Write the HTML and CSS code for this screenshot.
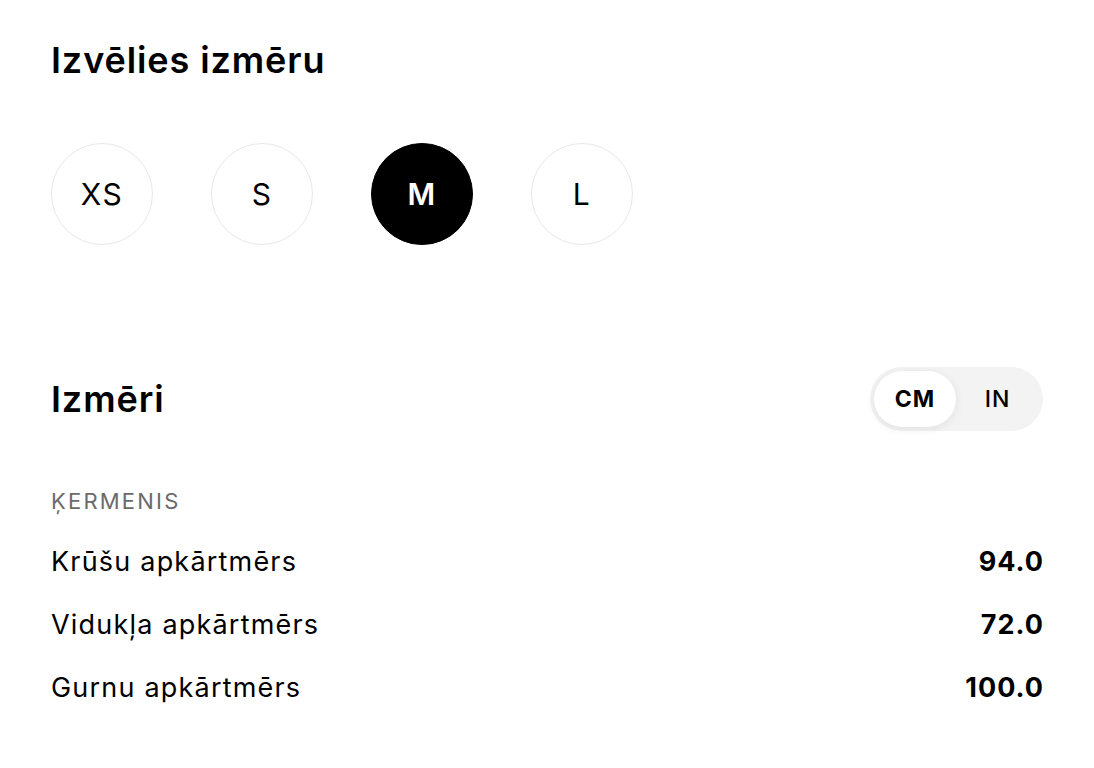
FILE: index.html
```html
<!DOCTYPE html>
<html lang="lv">
<head>
    <meta charset="UTF-8">
    <meta name="viewport" content="width=device-width, initial-scale=1.0">
    <title>Izmēri</title>
    <link rel="stylesheet" href="styles.css">
</head>
<body>
    <div class="page">
        <h1 class="title">Izvēlies izmēru</h1>

        <div class="sizes">
            <button class="size">XS</button>
            <button class="size">S</button>
            <button class="size active">M</button>
            <button class="size">L</button>
        </div>

        <div class="measure-head">
            <h2 class="title">Izmēri</h2>
            <div class="unit-toggle">
                <span class="unit on">CM</span>
                <span class="unit">IN</span>
            </div>
        </div>

        <div class="group-label">ĶERMENIS</div>

        <div class="rows">
            <div class="row">
                <span>Krūšu apkārtmērs</span>
                <span class="val">94.0</span>
            </div>
            <div class="row">
                <span>Vidukļa apkārtmērs</span>
                <span class="val">72.0</span>
            </div>
            <div class="row">
                <span>Gurnu apkārtmērs</span>
                <span class="val">100.0</span>
            </div>
        </div>
    </div>
</body>
</html>
```

FILE: styles.css
```css
body {
    margin: 0;
    padding: 0;
    background-color: #fff;
    color: #000;
    font-family: Inter, "Noto Sans", sans-serif;
}

.page {
    padding: 39px 51px 0 51px;
}

.title {
    margin: 0;
    font-size: 36px;
    line-height: 42px;
    font-weight: 600;
    letter-spacing: 0.9px;
}

/* size picker */
.sizes {
    display: flex;
    gap: 58px;
    margin-top: 62px;
}

.size {
    width: 102px;
    height: 102px;
    border-radius: 50%;
    border: 1.5px solid #e8e8e8;
    background: #fff;
    color: #000;
    font-family: inherit;
    font-size: 30px;
    font-weight: 400;
    letter-spacing: 1.5px;
    padding: 0;
    cursor: pointer;
}

.size.active {
    background: #000;
    border-color: #000;
    color: #fff;
    font-weight: 600;
}

/* measurements */
.measure-head {
    display: flex;
    justify-content: space-between;
    align-items: center;
    margin-top: 122px;
}

.unit-toggle {
    display: flex;
    align-items: center;
    height: 64px;
    width: 173px;
    box-sizing: border-box;
    padding: 4px;
    border-radius: 32px;
    background: #f3f3f3;
}

.unit {
    flex: 1;
    height: 56px;
    line-height: 56px;
    text-align: center;
    font-size: 23px;
    font-weight: 500;
    letter-spacing: 1px;
    border-radius: 28px;
}

.unit.on {
    flex: 0 0 82px;
    background: #fff;
    font-weight: 700;
    box-shadow: 0 2px 10px rgba(0, 0, 0, 0.08);
}

.group-label {
    margin-top: 55px;
    font-size: 22px;
    line-height: 30px;
    color: #6a6a6a;
    letter-spacing: 2.2px;
}

.rows {
    margin-top: 14px;
}

.row {
    display: flex;
    justify-content: space-between;
    align-items: center;
    height: 63px;
    font-size: 27px;
    letter-spacing: 1.2px;
}

.row .val {
    font-weight: 700;
    letter-spacing: 1px;
    margin-right: -1px;
}
```
